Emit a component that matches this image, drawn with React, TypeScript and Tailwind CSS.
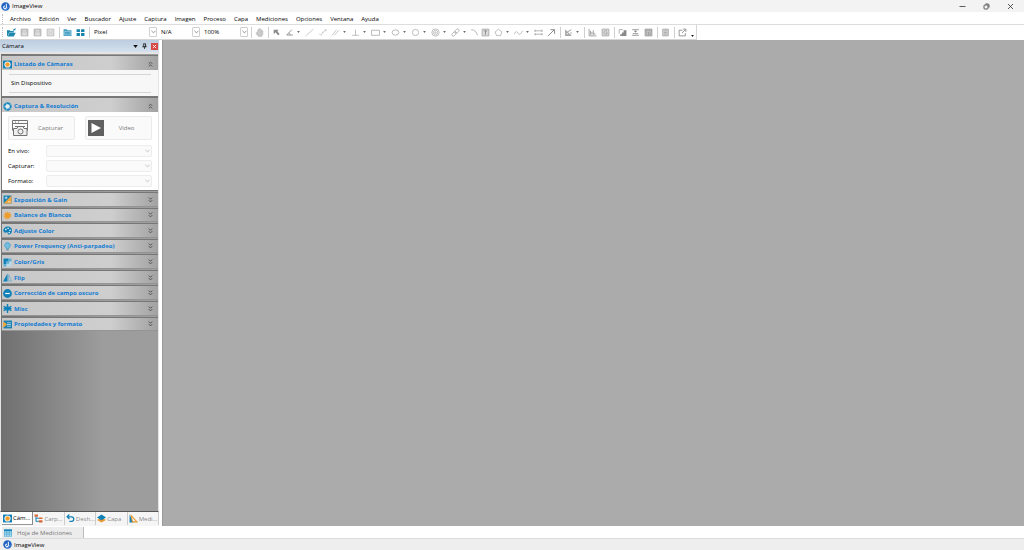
import type { ReactNode } from "react";
import clsx from "clsx";

const Svg = ({ children, className }: { children: ReactNode; className?: string }) => (
  <svg
    viewBox="0 0 16 16"
    fill="none"
    stroke="currentColor"
    strokeWidth="1.6"
    className={clsx("shrink-0", className)}
    aria-hidden="true"
  >
    {children}
  </svg>
);

const Logo = () => (
  <Svg className="size-[9px]">
    <circle cx="8" cy="8" r="7.6" fill="#1f62c4" stroke="none" />
    <path d="M9.5 3v6.2a2.4 2.4 0 1 1-2.4-2.2" stroke="#fff" strokeWidth="1.8" />
    <path d="M5 13.5c3 1 7-1 8-5" stroke="#8fc0f5" strokeWidth="1" />
  </Svg>
);

const icons: Record<string, ReactNode> = {
  open: (
    <g fill="#1d87ad" stroke="none">
      <path d="M0 4h5l1 1.5h6V8H4l-3 6H0z" />
      <path d="M4.5 8.5H15.5L12 15H1z" />
      <path d="M10 3.5 15.5 0l-1 5-1-1.3-1.5 1z" />
    </g>
  ),
  save: (
    <>
      <path d="M2 2h12v12H2z" fill="#c3c3c3" stroke="#b2b2b2" />
      <path d="M5 5h6M4 9h8M4 12h8" stroke="#eee" />
    </>
  ),
  mail: (
    <>
      <path d="M2 2h12v12H2z" fill="#e2e2e2" stroke="#bcbcbc" />
      <path d="m4 5 8 6M12 5l-8 6" stroke="#c8c8c8" />
    </>
  ),
  folder: (
    <>
      <path d="M1 2h6l1 2h7v10H1z" fill="#419fc2" stroke="none" />
      <path d="M3 6h10v6H3zM5 9h1M8 9h1M11 9h1" stroke="#b9dbe7" strokeWidth="1" />
    </>
  ),
  tiles: <path d="M1 2h6v5H1zm8 0h6v5H9zM1 9h6v5H1zm8 0h6v5H9z" fill="#1583ac" stroke="none" />,
  hand: (
    <path
      d="M4.5 9V4H6V2h1.5V1H9v1h1.5v1H12v2h2v6l-2 4H6L2 10V8z"
      fill="#c9c9c9"
      stroke="#b0b0b0"
      strokeWidth=".8"
    />
  ),
  pointer: <path d="M3 3h9L9.5 5.5l4 5.5-3 2-4-5.500L3 11z" fill="#8c8c8c" stroke="none" />,
  angle: <path d="M12 3 3 12.500h11M7 8.500c1.500 1 2 2.500 2 4" stroke="#8e8e8e" />,
  line: <path d="M1 14 15 2" stroke="#b5b5b5" strokeWidth="1.2" />,
  poly: <path d="m2 10 3 3 4-5-2-1M9 8l5-5h-2M14 3v3" stroke="#b5b5b5" strokeWidth="1.2" />,
  parallel: <path d="m2 13 8-10M6 13l8-9" stroke="#b0b0b0" strokeWidth="1.2" />,
  perp: <path d="M8 3v10M2 13h12" stroke="#aaa" strokeWidth="1.3" />,
  rect: <path d="M1 4h14v9H1z" stroke="#aaa" strokeWidth="1.4" />,
  ellipse: <ellipse cx="8" cy="8" rx="6" ry="4.8" stroke="#aaa" strokeWidth="1.4" />,
  circle: <circle cx="8" cy="8" r="5.5" stroke="#aaa" strokeWidth="1.4" />,
  rings: (
    <g stroke="#aaa" strokeWidth="1.2">
      <circle cx="8" cy="8" r="6.5" />
      <circle cx="8" cy="8" r="4" />
      <circle cx="8" cy="8" r="1.3" />
    </g>
  ),
  chain: (
    <g stroke="#a5a5a5" strokeWidth="1.3">
      <rect x="1" y="8" width="9" height="5" rx="2.5" transform="rotate(-45 5.5 10.5)" />
      <rect x="6" y="3" width="9" height="5" rx="2.5" transform="rotate(-45 10.5 5.5)" />
    </g>
  ),
  arc: <path d="M2 3c6 0 10 4 11 10" stroke="#9f9f9f" strokeWidth="1.3" />,
  text: (
    <>
      <path d="M2 2h12v12H2z" fill="#dcdcdc" stroke="#aaa" />
      <path d="M5 5h6M8 5v7" stroke="#888" />
    </>
  ),
  polygon: <path d="m8 2 6 5-2.500 6.500h-7L2 7z" stroke="#aaa" strokeWidth="1.3" />,
  curve: <path d="M1 11c1-5 4-6 6-2s5 3 8-4" stroke="#aaa" strokeWidth="1.3" />,
  dims: <path d="M1 5h14M1 11h14M2 3v4M14 3v4M2 9v4M14 9v4" stroke="#999" strokeWidth="1.3" />,
  arrow: <path d="M2 14 13 3M6 3h7.500v7.500" stroke="#888" strokeWidth="1.7" />,
  calib: (
    <>
      <path d="M2 2v12h12zM5 8v3h3z" fill="#a5a5a5" fillRule="evenodd" stroke="none" />
      <path d="m6 7 7-4M11 9h3" stroke="#999" />
    </>
  ),
  hist: <path d="M2 2v12h13M4.500 12V5M7 12V7M9.500 12V4M12 12V9" stroke="#999" />,
  gray: (
    <>
      <path d="M2 2h12v12H2z" fill="#dadada" stroke="#aaa" />
      <path d="M11 6a3.300 3.300 0 1 0 0 4V8.500H8.500" stroke="#999" strokeWidth="1.3" />
    </>
  ),
  stairs: (
    <>
      <path d="M4 14V11h3V8h3V4h5v10z" fill="#888" stroke="none" />
      <path d="M2 10V3h7" stroke="#aaa" />
    </>
  ),
  merge: <path d="M2 3h12M2 13h12M3 10h10M8 4v4M5.500 6h5" stroke="#8c8c8c" strokeWidth="1.5" />,
  calc: (
    <>
      <path d="M2 2h12v12H2z" fill="#ccc" stroke="#999" />
      <path d="M2 5h12M5 7v6M8 7v6M11 7v6" stroke="#999" />
    </>
  ),
  list: (
    <>
      <path d="M3 2h10v12H3z" fill="#d6d6d6" stroke="#aaa" />
      <path d="M5 5h6M5 8h6M5 11h6" stroke="#aaa" />
    </>
  ),
  share: <path d="M8 4H2v10h11V9M7 9l6-6M9 2h5v5" stroke="#888" strokeWidth="1.5" />,
};

// "|" is a separator, a trailing "+" adds a drop-down arrow
const fileTools = ["open", "save", "save", "mail", "|", "folder", "tiles", "|"];
const drawTools = [
  "|", "hand", "|", "pointer", "angle+", "line", "poly", "parallel+", "perp+", "rect+",
  "ellipse+", "circle+", "rings+", "chain+", "arc", "text", "polygon+", "curve+", "dims",
  "arrow", "|", "calib+", "|", "hist", "gray", "|", "stairs", "merge", "calc", "|", "list",
  "|", "share",
];

const Tools = ({ items }: { items: string[] }) => (
  <>
    {items.map((item, i) => {
      if (item === "|") {
        return (
          <span key={i} className="flex w-1 justify-center">
            <span className="h-[11px] w-px bg-[#cfcfcf]" />
          </span>
        );
      }
      const name = item.replace("+", "");
      return (
        <button
          key={i}
          aria-label={name}
          className={clsx("flex h-3 shrink-0 items-center", name === "arc" ? "w-[10px]" : item.endsWith("+") ? "w-5" : "w-[13px]")}
        >
          <span className={clsx("flex shrink-0 justify-center", name === "arc" ? "w-[10px]" : "w-[13px]")}>
            <Svg className="size-[9px]">{icons[name]}</Svg>
          </span>
          {item.endsWith("+") && (
            <svg viewBox="0 0 4 3" className="ml-px h-[2px] w-[3px]">
              <path d="M0 0h4L2 3z" fill="#666" />
            </svg>
          )}
        </button>
      );
    })}
  </>
);

const Chevron = ({ className }: { className?: string }) => (
  <svg viewBox="0 0 6 4" className={clsx("h-1 w-[5px]", className)} fill="none" stroke="currentColor">
    <path d="m.5.5 2.500 2.500L5.500.5" strokeWidth=".8" />
  </svg>
);

const Combo = ({ value, className }: { value: string; className: string }) => (
  <div className={clsx("relative flex items-center", className)}>
    <select aria-label={value} className="h-3 w-full appearance-none pl-[3px] outline-none">
      <option>{value}</option>
    </select>
    <span className="pointer-events-none absolute right-px flex h-[10px] w-2 items-center justify-center rounded-[1px] border border-[#d0d0d0] bg-white text-[#666]">
      <Chevron />
    </span>
  </div>
);

const DoubleChevron = ({ up }: { up?: boolean }) => (
  <svg viewBox="0 0 6 8" className={clsx("h-[6px] w-[5px] text-[#4a4a4a]", up && "rotate-180")} fill="none" stroke="currentColor">
    <path d="m.7.7 2.300 2.300L5.300.7M.7 4.200 3 6.500l2.300-2.300" strokeWidth="1.2" />
  </svg>
);

const sectionIcons: Record<string, ReactNode> = {
  camera: (
    <>
      <path d="M0 1h16v14H0z" fill="#1480b6" stroke="none" />
      <circle cx="8" cy="8" r="5.500" fill="#fff" stroke="none" />
      <circle cx="8" cy="8" r="4" fill="#f0a030" stroke="none" />
    </>
  ),
  aperture: (
    <>
      <circle cx="8" cy="8" r="5.5" stroke="#1787bd" strokeWidth="3.8" />
      <circle cx="8" cy="8" r="3.8" fill="#e4eef3" stroke="none" />
      <path d="m5 1 2 4M14 4l-3 2M14 12l-4-1M6 15v-4M1 9l4-1" stroke="#bfe3f4" strokeWidth=".9" />
    </>
  ),
  exposure: (
    <>
      <path d="M1 1h14v14H1z" fill="#1381b8" stroke="none" />
      <path d="M15 1v14H1z" fill="#eda63c" stroke="none" />
      <path d="M3 5h5M5.500 2.500v5M9 12h4" stroke="#fff" strokeWidth="1.2" />
    </>
  ),
  sun: (
    <>
      <circle cx="8" cy="8" r="5" fill="#ee9d2c" stroke="none" />
      <circle cx="8" cy="8" r="6" stroke="#ee9d2c" strokeWidth="2" strokeDasharray="2 1.77" />
    </>
  ),
  palette: (
    <>
      <path d="M8 1c5 0 8 3 8 7s-2 7-6 7c-2 0-1-4-3-4s-3 2-5 0C-2 7 3 1 8 1z" fill="#0e7fb6" stroke="none" />
      <g fill="#d8ecf5" stroke="none">
        <circle cx="5" cy="6" r="1.5" />
        <circle cx="9" cy="4" r="1.5" />
        <circle cx="12.5" cy="7.5" r="1.5" />
        <circle cx="11" cy="11.5" r="1.5" />
      </g>
    </>
  ),
  bulb: (
    <>
      <path d="M8 1a5 5 0 0 1 3 9l-1 2H6l-1-2a5 5 0 0 1 3-9z" fill="#74bce0" stroke="#2b92c5" strokeWidth="1" />
      <path d="M6 14h4" stroke="#4d7d94" />
    </>
  ),
  shades: (
    <>
      <path d="M1 1h14v14H1z" fill="#b9dcec" stroke="none" />
      <path d="M1 1h9v5H6v5H1z" fill="#1381b8" stroke="none" />
      <path d="M6 6h5v4H6zM1 11h5v4H1zM10 1h5v5h-5z" fill="#62aed3" stroke="none" />
    </>
  ),
  flip: (
    <>
      <path d="M8 1v14H0z" fill="#1180b6" stroke="none" />
      <path d="M10 3v11.500h5.500z" stroke="#5fa9cb" strokeWidth="1.2" />
    </>
  ),
  minus: (
    <>
      <circle cx="8" cy="8" r="7.8" fill="#0f80b8" stroke="none" />
      <path d="M4 8h8" stroke="#fff" strokeWidth="2.2" />
    </>
  ),
  misc: (
    <>
      <path d="M8 0v16M1 4l14 8M1 12l14-8M1 8h14" stroke="#0f80b8" strokeWidth="2.5" />
      <circle cx="8" cy="8" r="4" fill="#0f80b8" stroke="none" />
    </>
  ),
  props: (
    <>
      <path d="M1 1h15v14H1z" fill="#1b7faf" stroke="none" />
      <path d="M7 5h7M7 8h7M7 11h7" stroke="#cfe6f1" strokeWidth="1.3" />
      <path d="M0 4h3l4 4-4 4H0z" fill="#eda63c" stroke="none" />
    </>
  ),
  tree: (
    <>
      <path d="M1 1h6v4H1zM9 6h6v3H9zM9 11h6v4H9z" fill="#d9652f" stroke="none" />
      <path d="M3.500 5v8H9M3.500 7.500H9" stroke="#1480b6" strokeWidth="1.7" />
    </>
  ),
  undo: <path d="M6 1 2 5l4 4M2 5h8c5 0 5 8 0 8H6" stroke="#1480b6" strokeWidth="2.2" />,
  layers: (
    <>
      <path d="m8 6 8 4.500L8 15l-8-4.500z" fill="#e79a35" stroke="none" />
      <path d="m8 1 8 5-8 5-8-5z" fill="#0f80b8" stroke="none" />
    </>
  ),
  measure: (
    <>
      <path d="M1 1v14h7z" fill="#1480b6" stroke="none" />
      <path d="m4 3 10 11H6z" stroke="#e79a35" strokeWidth="1.8" />
    </>
  ),
  sheet: (
    <>
      <path d="M0 1h16v14H0z" fill="#cce9f6" stroke="none" />
      <path d="M.5 1.500h15v13H.5zM0 6h16M0 10h16M5.500 2v12M10.500 2v12" stroke="#2495c6" strokeWidth="1.2" />
      <path d="M0 1h16v3H0z" fill="#1685b9" stroke="none" />
    </>
  ),
};

const SectionHeader = ({ icon, title, open }: { icon: string; title: string; open?: boolean }) => (
  <button
    className={clsx(
      "flex w-full items-center border-t border-l border-[#777] bg-linear-to-r from-[#c8c8c8] via-[#cecece] via-70% to-[#a2a2a2] pr-[5px] pl-px text-left font-bold text-[#147dd3]",
      open ? "h-[15px] pt-[2px]" : "min-h-0 flex-1 border-b border-b-[#949494] pt-px",
    )}
  >
    <Svg className="size-[9px]">{sectionIcons[icon]}</Svg>
    <span className="ml-[2px] flex-1 whitespace-nowrap">{title}</span>
    <DoubleChevron up={open} />
  </button>
);

const collapsed = [
  { icon: "exposure", title: "Exposición & Gain" },
  { icon: "sun", title: "Balance de Blancos" },
  { icon: "palette", title: "Adjuste Color" },
  { icon: "bulb", title: "Power Frequency (Anti-parpadeo)" },
  { icon: "shades", title: "Color/Gris" },
  { icon: "flip", title: "Flip" },
  { icon: "minus", title: "Corrección de campo oscuro" },
  { icon: "misc", title: "Misc" },
  { icon: "props", title: "Propiedades y formato" },
];

const tabs = [
  { icon: "camera", label: "Cám..." },
  { icon: "tree", label: "Carp..." },
  { icon: "undo", label: "Desh..." },
  { icon: "layers", label: "Capa" },
  { icon: "measure", label: "Medi..." },
];

const Sidebar = () => (
  <aside className="flex w-[159px] shrink-0 flex-col">
    <div className="flex h-3 shrink-0 items-center bg-linear-to-b from-[#bccddf] to-[#d3e0ee] pr-px pl-[2px]">
      <h2 className="flex-1">Cámara</h2>
      <button aria-label="Menú" className="mr-1">
        <svg viewBox="0 0 6 4" className="h-[3px] w-[5px]">
          <path d="M0 0h6L3 4z" fill="#111" />
        </svg>
      </button>
      <button aria-label="Fijar" className="mr-1">
        <svg viewBox="0 0 6 8" className="h-[6px] w-[5px]" fill="none" stroke="#222">
          <path d="M1.500 1h3v4h-3zM0 5h6M3 5v3M4 1v4" />
        </svg>
      </button>
      <button aria-label="Cerrar" className="flex size-[7px] items-center justify-center bg-[#d64848]">
        <svg viewBox="0 0 6 6" className="size-[5px]" stroke="#fff">
          <path d="m1 1 4 4M5 1 1 5" />
        </svg>
      </button>
    </div>

    <div className="min-h-0 flex-1 overflow-hidden border-t-2 border-r border-b border-l border-[#e4e4e4] border-b-[#555] bg-linear-to-r from-[#707070] to-[#9d9d9d] to-65% pt-px">
      <section className="border-b border-[#777]">
        <SectionHeader icon="camera" title="Listado de Cámaras" open />
        <div className="border-l border-[#777] bg-[#f7f7f7] px-[7px] pt-1 pb-[3px]">
          <p className="border-y border-[#d5d5d5] py-1 pl-[2px] leading-[9px]">Sin Dispositivo</p>
        </div>
      </section>

      <section className="border-b border-[#777]">
        <SectionHeader icon="aperture" title="Captura & Resolución" open />
        <div className="border-l border-[#777] bg-white px-[6px] pt-1 pb-[2px]">
          <div className="flex gap-[10px] text-[#777]">
            <button disabled className="flex h-6 flex-1 items-center rounded-[2px] border border-[#ebebeb] bg-[#fafafa] px-[2px]">
              <svg viewBox="0 0 18 18" className="size-[18px]" fill="none" stroke="#727272">
                <path d="M1.500 1.500h15v10M1.500 1.500v10M1 4.500h16M4 3h1M7 3h1M4 7.500h10" />
                <path d="M2.500 16.500v-7H6l1-2h5l1 2h3v7z" fill="#eee" />
                <circle cx="9.500" cy="12.500" r="2.500" />
              </svg>
              <span className="flex-1 text-center">Capturar</span>
            </button>
            <button disabled className="flex h-6 flex-1 items-center rounded-[2px] border border-[#ebebeb] bg-[#fafafa] px-[2px]">
              <svg viewBox="0 0 16 16" className="size-4">
                <path d="M0 0h16v16H0z" fill="#606060" />
                <path d="m3.500 3 9.500 5-9.500 5z" fill="#fff" />
              </svg>
              <span className="flex-1 text-center">Video</span>
            </button>
          </div>
          <div className="mt-[3px]">
            {["En vivo:", "Capturar:", "Formato:"].map((label) => (
              <label key={label} className="flex h-[15px] items-center">
                <span className="w-[38px]">{label}</span>
                <span className="relative flex flex-1 items-center">
                  <select disabled className="h-3 w-full appearance-none rounded-[2px] border border-[#ededed] bg-[#fafafa]" />
                  <Chevron className="pointer-events-none absolute right-[2px] text-[#aaa]" />
                </span>
              </label>
            ))}
          </div>
        </div>
      </section>

      <div className="mt-px flex h-[139px] flex-col gap-px">
        {collapsed.map((s) => (
          <SectionHeader key={s.title} {...s} />
        ))}
      </div>
    </div>

    <div role="tablist" className="flex h-[14px] shrink-0 items-start bg-[#f5f5f5] pl-[2px]">
      {tabs.map((tab, i) => (
        <button
          key={tab.label}
          role="tab"
          aria-selected={i === 0}
          className={clsx(
            "flex h-[13px] flex-1 items-center gap-px border-r pl-px",
            i === 0 ? "border-b border-[#888] border-b-[#999] bg-white" : "border-[#ccc] text-[#8a8a8a]",
          )}
        >
          <Svg className="size-[9px]">{sectionIcons[tab.icon]}</Svg>
          <span className="whitespace-nowrap">{tab.label}</span>
        </button>
      ))}
    </div>
  </aside>
);

const menu = [
  "Archivo", "Edición", "Ver", "Buscador", "Ajuste", "Captura", "Imagen", "Proceso", "Capa",
  "Mediciones", "Opciones", "Ventana", "Ayuda",
];

export default function App() {
  return (
    <div className="flex h-screen flex-col overflow-hidden bg-white font-['Open_Sans','Noto_Sans',sans-serif] text-[6px] leading-[8px] text-black">
      <header className="flex h-3 shrink-0 items-center bg-[#f3f3f3] pl-px">
        <Logo />
        <h1 className="ml-[2px] flex-1">ImageView</h1>
        <div className="flex items-center gap-[17px] pr-[10px] text-[#333]">
          <button aria-label="Minimizar">
            <svg viewBox="0 0 7 7" className="size-[7px]" stroke="currentColor" strokeWidth=".8">
              <path d="M.5 3.500h6" />
            </svg>
          </button>
          <button aria-label="Restaurar">
            <svg viewBox="0 0 7 7" className="size-[7px]" fill="none" stroke="currentColor" strokeWidth=".8">
              <rect x="1" y="2" width="4" height="4" rx=".8" />
              <path d="M2.500 1h2.500q1 0 1 1v2.500" />
            </svg>
          </button>
          <button aria-label="Cerrar">
            <svg viewBox="0 0 7 7" className="size-[7px]" stroke="currentColor" strokeWidth=".8">
              <path d="m1 1 5 5M6 1 1 6" />
            </svg>
          </button>
        </div>
      </header>

      <nav className="flex h-[13px] shrink-0 items-center border-b border-[#ddd] pt-px pl-[2px]">
        <span className="mr-1 h-[10px] border-l border-dotted border-[#bbb]" />
        <div className="flex gap-2 pl-[3px]">
          {menu.map((item) => (
            <button key={item}>{item}</button>
          ))}
        </div>
      </nav>

      <div className="flex h-[15px] shrink-0">
        <div className="flex items-center border-r border-b border-[#d5d5d5] pl-[2px]">
          <span className="mr-[2px] h-[10px] border-l border-dotted border-[#bbb]" />
          <Tools items={fileTools} />
          <Combo value="Pixel" className="w-[67px]" />
          <Combo value="N/A" className="w-[43px]" />
          <Combo value="100%" className="w-[48px]" />
          <Tools items={drawTools} />
          <button aria-label="Más" className="flex h-3 w-[7px] items-end justify-center">
            <svg viewBox="0 0 4 3" className="mb-px h-[2px] w-[3px]">
              <path d="M0 0h4L2 3z" fill="#111" />
            </svg>
          </button>
        </div>
      </div>

      <div className="flex min-h-0 flex-1">
        <Sidebar />
        <main className="ml-[3px] flex-1 border-l border-[#999] bg-[#ababab]" />
      </div>

      <div className="flex h-3 shrink-0 items-end pl-[2px]">
        <button className="flex h-[11px] w-[82px] items-center gap-[5px] border-r border-[#bbb] bg-[#ececec] pl-[2px] text-[#777]">
          <Svg className="size-2">{sectionIcons.sheet}</Svg>
          Hoja de Mediciones
        </button>
      </div>

      <footer className="flex h-3 shrink-0 items-center gap-[2px] border-t border-[#dcdcdc] bg-[#eee] pl-[3px]">
        <Logo />
        ImageView
      </footer>
    </div>
  );
}
